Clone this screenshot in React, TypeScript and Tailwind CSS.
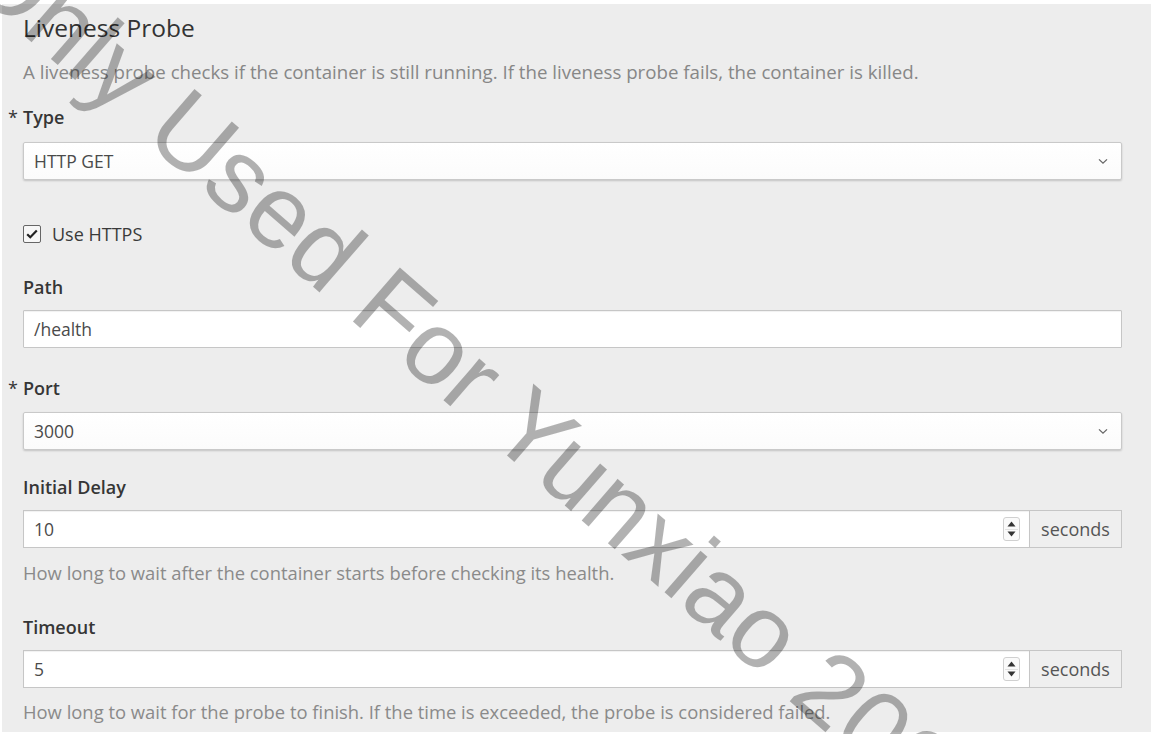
import React from "react";

const font = { fontFamily: '"Open Sans", "Liberation Sans", sans-serif' };

function Label({ text, required }: { text: string; required?: boolean }) {
  return (
    <div className="h-[20px] leading-[20px] text-[18px] font-semibold text-[#363636]">
      {required && <span className="inline-block w-[15px] -ml-[15px] font-normal">*</span>}
      {text}
    </div>
  );
}

function Chevron() {
  return (
    <svg width="10" height="7" viewBox="0 0 10 7" className="text-[#666]">
      <path d="M1 1.4 L5 5.2 L9 1.4" fill="none" stroke="currentColor" strokeWidth="1.3" />
    </svg>
  );
}

function SelectBox({ value, className }: { value: string; className: string }) {
  return (
    <div
      className={`${className} h-[38px] flex items-center justify-between pl-[10px] pr-[13px] bg-gradient-to-b from-white to-[#fbfbfb] border border-[#c9c9c9] rounded-[2px] shadow-[0_1px_2px_rgba(0,0,0,0.18)] text-[17.5px] text-[#4a4a4a]`}
    >
      <span>{value}</span>
      <Chevron />
    </div>
  );
}

function TextBox({ value, className }: { value: string; className: string }) {
  return (
    <div
      className={`${className} h-[38px] flex items-center pl-[10px] bg-white border border-[#c6c6c6] rounded-[1px] shadow-[inset_0_1px_1px_rgba(0,0,0,0.06)] text-[17.5px] text-[#4a4a4a]`}
    >
      {value}
    </div>
  );
}

function Spinner() {
  return (
    <div className="w-[17px] h-[24px] flex flex-col items-center justify-between py-[3px] border border-[#d0d0d0] rounded-[3px] bg-[#fafafa]">
      <svg width="9" height="6" viewBox="0 0 9 6">
        <path d="M0.5 5.5 L4.5 0.5 L8.5 5.5 Z" fill="#333" />
      </svg>
      <div className="w-[13px] h-px bg-[#e2e2e2]" />
      <svg width="9" height="6" viewBox="0 0 9 6">
        <path d="M0.5 0.5 L4.5 5.5 L8.5 0.5 Z" fill="#333" />
      </svg>
    </div>
  );
}

function NumberBox({ value, className }: { value: string; className: string }) {
  return (
    <div className={`${className} h-[38px] flex`}>
      <div className="flex-1 flex items-center justify-between pl-[10px] pr-[9px] bg-white border border-[#c6c6c6] shadow-[inset_0_1px_1px_rgba(0,0,0,0.06)] text-[17.5px] text-[#4a4a4a]">
        <span>{value}</span>
        <Spinner />
      </div>
      <div className="w-[92px] flex items-center justify-center bg-[#efefef] border border-l-0 border-[#c6c6c6] text-[18px] text-[#555]">
        seconds
      </div>
    </div>
  );
}

function Help({ text, className }: { text: string; className: string }) {
  return (
    <div className={`${className} h-[20px] leading-[20px] text-[#8a8a8a] whitespace-nowrap`}>{text}</div>
  );
}

export default function App() {
  return (
    <div className="w-[1151px] h-[734px] bg-white pt-[4px] pl-[2px] overflow-hidden relative" style={font}>
      <div className="h-[728px] bg-[#ededed] pl-[21px] pr-[29px] pt-[12px]">
        <div className="h-[24px] leading-[24px] text-[24.5px] text-[#333]">Liveness Probe</div>
        <Help
          className="mt-[22px] text-[18.7px] text-[#878787]"
          text="A liveness probe checks if the container is still running. If the liveness probe fails, the container is killed."
        />
        <div className="mt-[25px]">
          <Label text="Type" required />
        </div>
        <SelectBox className="mt-[15px]" value="HTTP GET" />

        <div className="mt-[44px] h-[20px] flex items-center gap-[11px]">
          <div className="w-[18px] h-[18px] border border-[#666] rounded-[2px] bg-[#f7f7f7] flex items-center justify-center">
            <svg width="12" height="10" viewBox="0 0 12 10">
              <path d="M1.2 5.2 L4.3 8.3 L10.8 1.6" fill="none" stroke="#222" strokeWidth="2.2" />
            </svg>
          </div>
          <span className="text-[18px] text-[#3a3a3a]">Use HTTPS</span>
        </div>

        <div className="mt-[33px]">
          <Label text="Path" />
        </div>
        <TextBox className="mt-[13px]" value="/health" />

        <div className="mt-[30px]">
          <Label text="Port" required />
        </div>
        <SelectBox className="mt-[14px]" value="3000" />

        <div className="mt-[27px]">
          <Label text="Initial Delay" />
        </div>
        <NumberBox className="mt-[13px]" value="10" />
        <Help
          className="mt-[15px] text-[18.4px]"
          text="How long to wait after the container starts before checking its health."
        />

        <div className="mt-[34px]">
          <Label text="Timeout" />
        </div>
        <NumberBox className="mt-[13px]" value="5" />
        <Help
          className="mt-[14px] text-[18.4px]"
          text="How long to wait for the probe to finish. If the time is exceeded, the probe is considered failed."
        />
      </div>

      {/* watermark */}
      <div
        className="absolute left-[16px] top-[-88px] origin-top-left rotate-[41deg] whitespace-nowrap text-[104px] leading-none text-black/30 pointer-events-none"
        style={{ fontFamily: '"Liberation Sans", Arial, sans-serif' }}
      >
        Only Used For Yunxiao 2023
      </div>
    </div>
  );
}
